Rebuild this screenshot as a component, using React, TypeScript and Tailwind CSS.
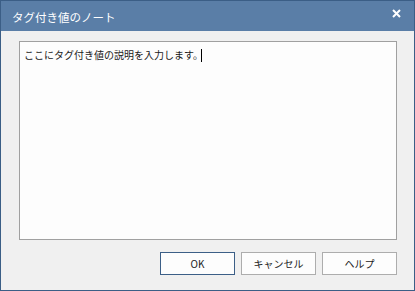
export default function App() {
  const font = { fontFamily: '"Noto Sans CJK JP", "Noto Sans", sans-serif' };
  const buttons = [
    { id: "ok", label: "OK", primary: true },
    { id: "cancel", label: "キャンセル", primary: false },
    { id: "help", label: "ヘルプ", primary: false },
  ];

  return (
    <div
      className="w-[415px] h-[291px] flex flex-col border border-[#3b5e86] bg-[#f0f0f0]"
      style={font}
    >
      {/* Title bar */}
      <div className="h-[30px] shrink-0 bg-[#5a7ea7] flex items-center justify-between pl-[11px] pr-[13px] pt-[3px]">
        <span className="text-white text-[11.5px] leading-none">タグ付き値のノート</span>
        <svg width="9" height="9" viewBox="0 0 9 9" className="mb-[8px]">
          <path d="M1 1 L8 8 M8 1 L1 8" stroke="#ffffff" strokeWidth="2" />
        </svg>
      </div>

      {/* Body */}
      <div className="flex-1 flex flex-col pt-[10px] pl-[18px] pr-[17px] pb-[15px]">
        <div className="h-[199px] border border-[#a0a0a0] bg-[#fdfdfd] pl-[4px] pt-[6px]">
          <div className="flex items-center text-[10px] leading-[14px] text-[#1a1a1a]">
            <span>ここにタグ付き値の説明を入力します。</span>
            <span className="-ml-[2px] w-px h-[13px] bg-black" />
          </div>
        </div>

        <div className="mt-[12px] flex justify-end gap-[6px]">
          {buttons.map((b) => (
            <div
              key={b.id}
              className={
                b.primary
                  ? "w-[75px] h-[23px] flex items-center justify-center border border-[#3c5f87] bg-[#fdfdfd] text-[10px] text-[#222]"
                  : "w-[75px] h-[23px] flex items-center justify-center border border-[#adadad] bg-[#fdfdfd] text-[10px] text-[#222]"
              }
            >
              {b.label}
            </div>
          ))}
        </div>
      </div>
    </div>
  );
}
